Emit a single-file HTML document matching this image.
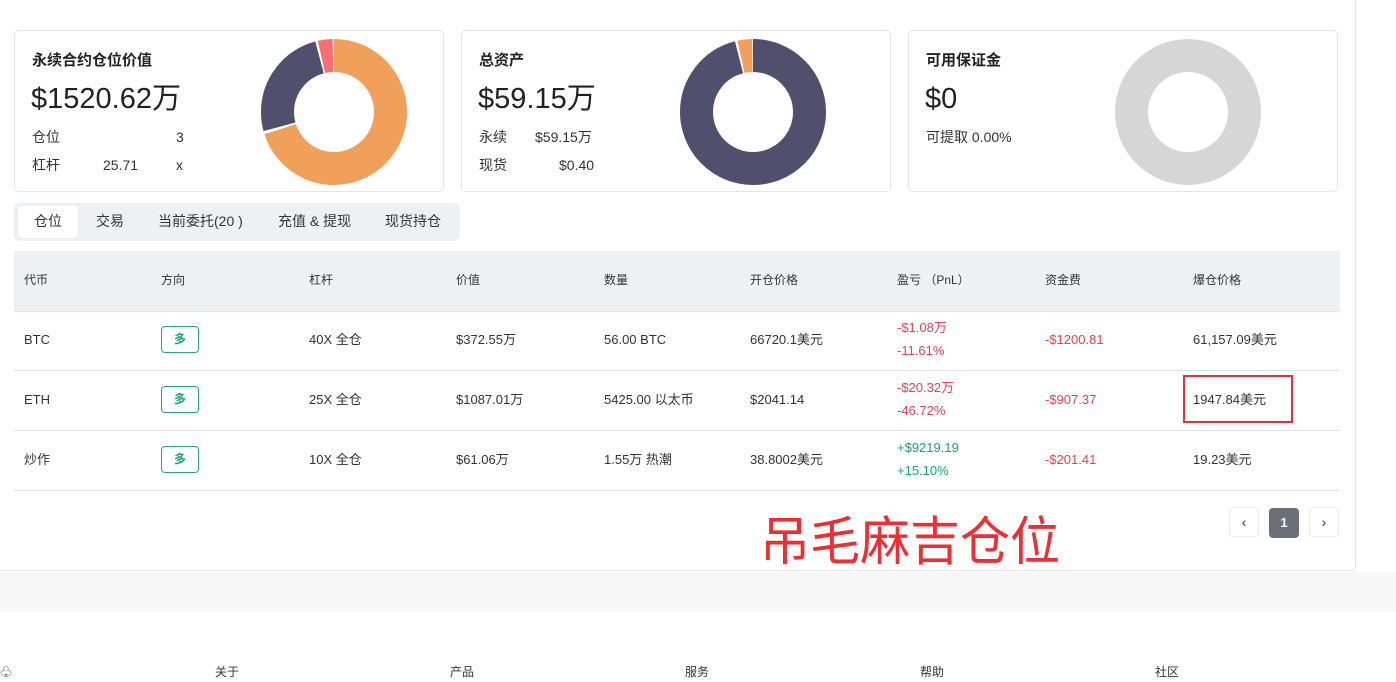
<!DOCTYPE html><html><head><meta charset="utf-8"><style>
body{margin:0;width:1396px;height:669px;background:#fff;font-family:"Liberation Sans","Noto Sans CJK SC",sans-serif;color:#333;position:relative;overflow:hidden}
.a{position:absolute;line-height:20px;white-space:nowrap}
.card{position:absolute;top:30px;height:162px;width:430px;border:1px solid #e3e5e8;border-radius:5px;box-sizing:border-box;background:#fff}
.t{font-size:15px;font-weight:bold;color:#222}
.big{font-size:29px;color:#222;line-height:36px}
.s{font-size:14px;color:#333}
.th{font-size:12px;color:#333}
.td{font-size:13px;color:#333}
.red{color:#e8434f}.grn{color:#1aa37a}
.tag{position:absolute;width:38px;height:27px;border:1px solid #2aa58a;border-radius:4px;box-sizing:border-box;color:#1aa37a;font-size:12px;font-weight:bold;text-align:center;line-height:25px}
</style></head><body>
<div class="a" style="left:0;top:0;width:1356px;height:571px;border-right:1px solid #e3e5e8;border-bottom:1px solid #e3e5e8;border-radius:0 0 4px 0;box-sizing:border-box"></div>
<div class="a" style="left:0;top:572px;width:1396px;height:40px;background:#f7f7f7"></div>

<div class="card" style="left:14px">
<div class="a t" style="left:17px;top:20px">永续合约仓位价值</div>
<div class="a big" style="left:16px;top:50px">$1520.62万</div>
<div class="a s" style="left:17px;top:96px">仓位</div><div class="a s" style="left:161px;top:96px">3</div>
<div class="a s" style="left:17px;top:124px">杠杆</div><div class="a s" style="left:88px;top:124px">25.71</div><div class="a s" style="left:161px;top:124px">x</div>
</div>
<div class="card" style="left:461px">
<div class="a t" style="left:17px;top:20px">总资产</div>
<div class="a big" style="left:16px;top:50px">$59.15万</div>
<div class="a s" style="left:17px;top:96px">永续</div><div class="a s" style="left:73px;top:96px">$59.15万</div>
<div class="a s" style="left:17px;top:124px">现货</div><div class="a s" style="left:97px;top:124px">$0.40</div>
</div>
<div class="card" style="left:908px">
<div class="a t" style="left:17px;top:20px">可用保证金</div>
<div class="a big" style="left:16px;top:50px">$0</div>
<div class="a s" style="left:17px;top:96px">可提取 0.00%</div>
</div>
<svg class="a" style="left:0;top:0" width="1396" height="200">
<g transform="rotate(-90 334 112)" fill="none" stroke-width="33">
<circle cx="334" cy="112" r="56.5" stroke="#f0a05a" stroke-dasharray="248.5 400"/>
<circle cx="334" cy="112" r="56.5" stroke="#50506e" stroke-dasharray="0 251 89 400"/>
<circle cx="334" cy="112" r="56.5" stroke="#f76d74" stroke-dasharray="0 342 11.5 400"/>
</g>
<g transform="rotate(-90 753 112)" fill="none" stroke-width="33">
<circle cx="753" cy="112" r="56.5" stroke="#50506e" stroke-dasharray="340.5 400"/>
<circle cx="753" cy="112" r="56.5" stroke="#f0a05a" stroke-dasharray="0 342.5 11.5 400"/>
</g>
<circle cx="1188" cy="112" r="56.5" fill="none" stroke="#d6d6d6" stroke-width="33"/>
</svg>

<div class="a" style="left:14px;top:203px;width:446px;height:38px;background:#eef1f4;border-radius:6px"></div>
<div class="a" style="left:18px;top:206px;width:60px;height:32px;background:#fff;border-radius:5px"></div>
<div class="a s" style="left:34px;top:211px">仓位</div>
<div class="a s" style="left:96px;top:211px">交易</div>
<div class="a s" style="left:158px;top:211px">当前委托(20 )</div>
<div class="a s" style="left:278px;top:211px">充值 &amp; 提现</div>
<div class="a s" style="left:385px;top:211px">现货持仓</div>

<div class="a" style="left:14px;top:251px;width:1326px;height:60px;background:#eef1f4;border-bottom:1px solid #e3e5e8"></div>
<div class="a" style="left:14px;top:370px;width:1326px;height:1px;background:#e3e5e8"></div>
<div class="a" style="left:14px;top:430px;width:1326px;height:1px;background:#e3e5e8"></div>
<div class="a" style="left:14px;top:490px;width:1326px;height:1px;background:#e3e5e8"></div>
<div class="a th" style="left:24px;top:270px">代币</div>
<div class="a th" style="left:161px;top:270px">方向</div>
<div class="a th" style="left:309px;top:270px">杠杆</div>
<div class="a th" style="left:456px;top:270px">价值</div>
<div class="a th" style="left:604px;top:270px">数量</div>
<div class="a th" style="left:750px;top:270px">开仓价格</div>
<div class="a th" style="left:897px;top:270px">盈亏 （PnL）</div>
<div class="a th" style="left:1045px;top:270px">资金费</div>
<div class="a th" style="left:1193px;top:270px">爆仓价格</div>

<div class="a td" style="left:24px;top:330px">BTC</div><div class="tag" style="left:161px;top:326px">多</div>
<div class="a td" style="left:309px;top:330px">40X 全仓</div><div class="a td" style="left:456px;top:330px">$372.55万</div>
<div class="a td" style="left:604px;top:330px">56.00 BTC</div><div class="a td" style="left:750px;top:330px">66720.1美元</div>
<div class="a td red" style="left:897px;top:318px">-$1.08万</div><div class="a td red" style="left:897px;top:341px">-11.61%</div>
<div class="a td red" style="left:1045px;top:330px">-$1200.81</div><div class="a td" style="left:1193px;top:330px">61,157.09美元</div>

<div class="a td" style="left:24px;top:390px">ETH</div><div class="tag" style="left:161px;top:386px">多</div>
<div class="a td" style="left:309px;top:390px">25X 全仓</div><div class="a td" style="left:456px;top:390px">$1087.01万</div>
<div class="a td" style="left:604px;top:390px">5425.00 以太币</div><div class="a td" style="left:750px;top:390px">$2041.14</div>
<div class="a td red" style="left:897px;top:378px">-$20.32万</div><div class="a td red" style="left:897px;top:401px">-46.72%</div>
<div class="a td red" style="left:1045px;top:390px">-$907.37</div><div class="a td" style="left:1193px;top:390px">1947.84美元</div>
<div class="a" style="left:1183px;top:375px;width:110px;height:48px;border:2px solid #e8303a;box-sizing:border-box"></div>

<div class="a td" style="left:24px;top:450px">炒作</div><div class="tag" style="left:161px;top:446px">多</div>
<div class="a td" style="left:309px;top:450px">10X 全仓</div><div class="a td" style="left:456px;top:450px">$61.06万</div>
<div class="a td" style="left:604px;top:450px">1.55万 热潮</div><div class="a td" style="left:750px;top:450px">38.8002美元</div>
<div class="a td grn" style="left:897px;top:438px">+$9219.19</div><div class="a td grn" style="left:897px;top:461px">+15.10%</div>
<div class="a td red" style="left:1045px;top:450px">-$201.41</div><div class="a td" style="left:1193px;top:450px">19.23美元</div>

<div class="a" style="left:1229px;top:507px;width:30px;height:30px;border:1px solid #eee;border-radius:4px;box-sizing:border-box;text-align:center;line-height:28px;font-size:14px">&lsaquo;</div>
<div class="a" style="left:1269px;top:508px;width:30px;height:30px;background:#6b6f78;border-radius:4px;color:#fff;text-align:center;line-height:30px;font-size:13px;font-weight:bold">1</div>
<div class="a" style="left:1309px;top:507px;width:30px;height:30px;border:1px solid #eee;border-radius:4px;box-sizing:border-box;text-align:center;line-height:28px;font-size:14px">&rsaquo;</div>
<div class="a" style="left:760px;top:508px;font-size:50px;color:#ee2e33;line-height:56px;font-family:'Noto Sans CJK SC',sans-serif;transform:scaleY(1.05);transform-origin:left top">吊毛麻吉仓位</div>
<div class="a" style="left:0;top:662px;font-size:12px;color:#555">♧</div>
<div class="a" style="left:215px;top:662px;font-size:12px;color:#333">关于</div>
<div class="a" style="left:450px;top:662px;font-size:12px;color:#333">产品</div>
<div class="a" style="left:685px;top:662px;font-size:12px;color:#333">服务</div>
<div class="a" style="left:920px;top:662px;font-size:12px;color:#333">帮助</div>
<div class="a" style="left:1155px;top:662px;font-size:12px;color:#333">社区</div>
</body></html>
